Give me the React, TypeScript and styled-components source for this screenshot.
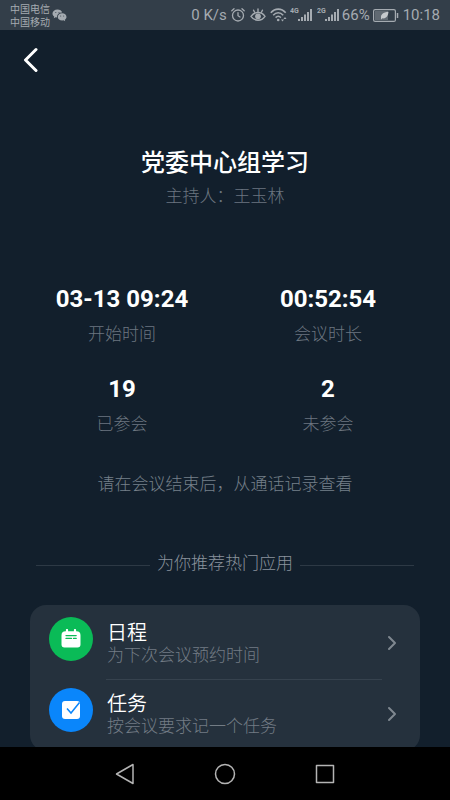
import React from "react";
import styled, { createGlobalStyle } from "styled-components";

const GlobalStyle = createGlobalStyle`
  *, *::before, *::after { box-sizing: border-box; }
  body {
    margin: 0;
    background: #121f2c;
    font-family: Roboto, "Noto Sans CJK SC", sans-serif;
  }
`;

const Page = styled.div`
  height: 100vh;
  display: flex;
  flex-direction: column;
  background: #121f2c;
  color: #ffffff;
`;

const StatusBar = styled.header`
  flex: none;
  height: 30px;
  display: flex;
  align-items: center;
  justify-content: space-between;
  padding: 0 10px;
  background: #333e49;
  color: #a5abb1;
`;

const StatusGroup = styled.div`
  display: flex;
  align-items: center;
`;

const Carriers = styled.div`
  display: flex;
  flex-direction: column;
  padding-top: 2px;
  font-size: 10px;
  line-height: 13px;
  margin-right: 2px;
`;

const StatusText = styled.span<{ $gap: number }>`
  font-size: 15px;
  line-height: 20px;
  white-space: pre;
  margin-right: ${(p) => p.$gap}px;
`;

const StatusIcon = styled.svg<{ $gap: number }>`
  display: block;
  flex: none;
  margin-right: ${(p) => p.$gap}px;
`;

const Content = styled.main`
  flex: 1;
  min-height: 0;
  overflow-y: auto;
  scrollbar-width: none;
  display: flex;
  flex-direction: column;
`;

const TopBar = styled.div`
  flex: none;
  padding: 12px 12px 0;
`;

const BackButton = styled.button`
  display: flex;
  align-items: center;
  justify-content: center;
  width: 36px;
  height: 36px;
  padding: 0;
  border: 0;
  background: none;
  color: #ffffff;
`;

const Heading = styled.section`
  padding-top: 67px;
  text-align: center;
`;

const Title = styled.h1`
  margin: 0;
  font-size: 24px;
  line-height: 36px;
  font-weight: 500;
`;

const Muted = styled.p`
  margin: 0;
  font-size: 17px;
  line-height: 24px;
  font-weight: 300;
  color: #6c7680;
`;

const HostLine = styled(Muted)`
  margin-top: 3px;
`;

const Stats = styled.dl`
  display: grid;
  grid-template-columns: 1fr 1fr;
  row-gap: 29px;
  margin: 77px 0 0;
  padding: 0 19px;
`;

const Stat = styled.div`
  display: flex;
  flex-direction: column-reverse;
  align-items: center;
  gap: 9px;
`;

const StatLabel = styled.dt`
  font-size: 17px;
  line-height: 24px;
  font-weight: 300;
  color: #6c7680;
`;

const StatValue = styled.dd`
  margin: 0;
  font-size: 24px;
  line-height: 28px;
  font-weight: 700;
`;

const Notice = styled(Muted)`
  margin-top: 36px;
  text-align: center;
  color: #76808a;
`;

const SectionTitle = styled.h2`
  display: flex;
  align-items: center;
  gap: 7px;
  margin: 55px 36px 0;
  font-size: 17px;
  line-height: 24px;
  font-weight: 300;
  color: #8a939d;

  &::before,
  &::after {
    content: "";
    flex: 1;
    height: 1px;
    margin-top: 4px;
    background: #2d3945;
  }
`;

const AppCard = styled.nav`
  flex: none;
  margin: 30px 30px 20px;
  padding-top: 4px;
  border-radius: 16px;
  background: #25313d;
`;

const AppRow = styled.a`
  display: flex;
  align-items: stretch;
  padding: 0 19px;
  height: 71px;
  color: inherit;
  text-decoration: none;
`;

const AppBadge = styled.span<{ $color: string }>`
  flex: none;
  align-self: flex-start;
  display: flex;
  align-items: center;
  justify-content: center;
  width: 44px;
  height: 44px;
  margin-top: 8px;
  border-radius: 50%;
  background: ${(p) => p.$color};
`;

const AppText = styled.span<{ $divided: boolean }>`
  flex: 1;
  display: flex;
  flex-direction: column;
  margin-left: 13px;
  padding: 12px 0 0 1px;
  border-bottom: 1px solid ${(p) => (p.$divided ? "#36424e" : "transparent")};
`;

const AppName = styled.span`
  font-size: 20px;
  line-height: 24px;
  font-weight: 350;
`;

const AppHint = styled.span`
  font-size: 17px;
  line-height: 20px;
  font-weight: 300;
  color: #737c85;
`;

const Chevron = styled.svg`
  flex: none;
  align-self: center;
  display: block;
  margin: 0 3px 3px 4px;
`;

const SystemNav = styled.footer`
  flex: none;
  height: 53px;
  display: flex;
  align-items: center;
  justify-content: center;
  gap: 60px;
  background: #000000;
`;

const SystemButton = styled.button`
  display: flex;
  align-items: center;
  justify-content: center;
  width: 40px;
  height: 40px;
  padding: 0;
  border: 0;
  background: none;
  color: #b4b4b4;
`;

const WeChatIcon = () => (
  <StatusIcon $gap={0} width="15" height="13" viewBox="0 0 15 13" aria-hidden="true">
    <path d="M5.500 .5C2.600.5.500 2.300.500 4.600c0 1.300.7 2.300 1.700 3l-.4 1.600 1.800-.9 1.500.2C4.900 5.300 7 3.500 10.200 3.500 9.700 1.700 7.800.5 5.500.5z" fill="currentColor" />
    <path d="M10.200 4.300c-2.500 0-4.400 1.600-4.400 3.600s1.900 3.600 4.400 3.600l1.300-.2 1.700.9-.4-1.500c1-.6 1.700-1.600 1.700-2.800 0-2-1.900-3.600-4.300-3.600z" fill="currentColor" />
    <g fill="#333e49">
      <circle cx="3.800" cy="3.400" r=".5" />
      <circle cx="7" cy="3.400" r=".5" />
      <circle cx="8.700" cy="7" r=".5" />
      <circle cx="11.700" cy="7" r=".5" />
    </g>
  </StatusIcon>
);

const AlarmIcon = () => (
  <StatusIcon $gap={5} width="14" height="14" viewBox="0 0 14 14" fill="none" stroke="currentColor" strokeWidth="1.300" strokeLinecap="round" aria-hidden="true">
    <circle cx="7" cy="7.500" r="5.500" />
    <path d="M7 4.700v3l2 1.300M.8 2.800 3 .8M13.200 2.800 11 .8" />
  </StatusIcon>
);

const EyeIcon = () => (
  <StatusIcon $gap={4} width="16" height="14" viewBox="0 0 16 14" fill="none" stroke="currentColor" strokeWidth="1.400" strokeLinecap="round" aria-hidden="true">
    <path d="M1 8.300C4.500 3.300 11.500 3.300 15 8.300 11.500 13.500 4.500 13.500 1 8.300z" />
    <circle cx="8" cy="8.300" r="2.200" fill="currentColor" />
    <path d="M8 1v2.500M3.600 2.200l1 2M12.400 2.200l-1 2" />
  </StatusIcon>
);

const WifiIcon = () => (
  <StatusIcon $gap={3} width="17" height="14" viewBox="0 0 17 14" fill="none" stroke="currentColor" strokeWidth="1.600" aria-hidden="true">
    <path d="M.8 4.800C5-.1 11.500-.1 15.700 4.800M3.200 7.200c3-3.200 7-3.200 10 0M5.600 9.600c1.700-1.700 3.600-1.700 5.300 0" />
    <circle cx="8.200" cy="12" r="1.300" fill="currentColor" stroke="none" />
    <path d="M11 11.500h3l-1.500 2zM13.500 11l1.500-2 1.500 2z" fill="currentColor" stroke="none" />
  </StatusIcon>
);

const Signal = ({ label }: { label: string }) => (
  <StatusIcon $gap={label === "4G" ? 4 : 2} width="23" height="16" viewBox="0 0 23 16" fill="currentColor" role="img" aria-label={label}>
    <text x="0" y="6" fontSize="7" fontWeight="700" fontFamily="Roboto, sans-serif">{label}</text>
    <path d="M8 12h2v2H8zM11 10h2v4h-2zM14 7.500h2V14h-2zM17 5h2v9h-2zM20 2h2v12h-2z" />
  </StatusIcon>
);

const BatteryIcon = () => (
  <StatusIcon $gap={4} width="26" height="13" viewBox="0 0 26 13" aria-hidden="true">
    <rect x=".6" y=".6" width="21.800" height="11.800" rx="1.500" fill="none" stroke="currentColor" strokeWidth="1.200" />
    <rect x="2" y="2" width="13" height="9" fill="currentColor" opacity=".4" />
    <path d="M8 9c-.5-3.500 2-5.500 7.500-6.200C15.200 7 13 10 9.500 9.300L8.200 10.500z" fill="#c5c9cd" />
    <path d="M24.500 4v5" stroke="currentColor" strokeWidth="1.500" />
  </StatusIcon>
);

const CalendarIcon = () => (
  <svg width="20" height="20" viewBox="0 0 20 20" aria-hidden="true">
    <path d="M4.500 2.300h11a4 4 0 0 1 4 4v9.200a3 3 0 0 1-3 3h-13a3 3 0 0 1-3-3V6.300a4 4 0 0 1 4-4z" fill="#fff" />
    <path d="M6 1v2.500M14 1v2.500" stroke="#fff" strokeWidth="2.200" strokeLinecap="round" />
    <path d="M5 6.600h10.200M5 9.400h5.500M12.500 9.400h2.700" stroke="#0abb57" strokeWidth="1.300" strokeLinecap="round" />
  </svg>
);

const TaskIcon = () => (
  <svg width="20" height="20" viewBox="0 0 20 20" fill="none" aria-hidden="true">
    <rect x="1" y="1" width="18" height="18" rx="3" fill="#fff" />
    <path d="m6 8.500 4 4.500 8.500-10.500" stroke="#0a86fb" strokeWidth="1.500" />
  </svg>
);

const stats = [
  { label: "开始时间", value: "03-13 09:24" },
  { label: "会议时长", value: "00:52:54" },
  { label: "已参会", value: "19" },
  { label: "未参会", value: "2" },
];

const apps = [
  { name: "日程", hint: "为下次会议预约时间", color: "#0abb57", href: "#schedule", icon: <CalendarIcon /> },
  { name: "任务", hint: "按会议要求记一个任务", color: "#0a86fb", href: "#tasks", icon: <TaskIcon /> },
];

export default function App() {
  return (
    <Page lang="zh-CN">
      <GlobalStyle />
      <StatusBar>
        <StatusGroup>
          <Carriers>
            <span>中国电信</span>
            <span>中国移动</span>
          </Carriers>
          <WeChatIcon />
        </StatusGroup>
        <StatusGroup>
          <StatusText $gap={4}>0 K/s</StatusText>
          <AlarmIcon />
          <EyeIcon />
          <WifiIcon />
          <Signal label="4G" />
          <Signal label="2G" />
          <StatusText $gap={3}>66%</StatusText>
          <BatteryIcon />
          <StatusText $gap={0}>10:18</StatusText>
        </StatusGroup>
      </StatusBar>
      <Content>
        <TopBar>
          <BackButton type="button" aria-label="返回">
            <svg width="16" height="26" viewBox="0 0 16 26" fill="none" stroke="currentColor" strokeWidth="3" strokeLinecap="round" strokeLinejoin="round">
              <path d="M14 2.500 3.500 13 14 23.500" />
            </svg>
          </BackButton>
        </TopBar>
        <Heading>
          <Title>党委中心组学习</Title>
          <HostLine>主持人：王玉林</HostLine>
        </Heading>
        <Stats>
          {stats.map((s) => (
            <Stat key={s.label}>
              <StatLabel>{s.label}</StatLabel>
              <StatValue>{s.value}</StatValue>
            </Stat>
          ))}
        </Stats>
        <Notice>请在会议结束后，从通话记录查看</Notice>
        <SectionTitle>为你推荐热门应用</SectionTitle>
        <AppCard aria-label="热门应用">
          {apps.map((a, i) => (
            <AppRow key={a.name} href={a.href}>
              <AppBadge $color={a.color}>{a.icon}</AppBadge>
              <AppText $divided={i < apps.length - 1}>
                <AppName>{a.name}</AppName>
                <AppHint>{a.hint}</AppHint>
              </AppText>
              <Chevron width="12" height="16" viewBox="0 0 12 16" fill="none" stroke="#7f8890" strokeWidth="2" strokeLinecap="round" strokeLinejoin="round" aria-hidden="true">
                <path d="m3 2 6 6-6 6" />
              </Chevron>
            </AppRow>
          ))}
        </AppCard>
      </Content>
      <SystemNav>
        <SystemButton type="button" aria-label="返回键">
          <svg width="22" height="22" viewBox="0 0 22 22" fill="none" stroke="currentColor" strokeWidth="1.500" strokeLinejoin="round">
            <path d="M19 1.500v19L2.500 11z" />
          </svg>
        </SystemButton>
        <SystemButton type="button" aria-label="主屏幕">
          <svg width="22" height="22" viewBox="0 0 22 22" fill="none" stroke="currentColor" strokeWidth="1.500">
            <circle cx="11" cy="11" r="9.500" />
          </svg>
        </SystemButton>
        <SystemButton type="button" aria-label="最近任务">
          <svg width="22" height="22" viewBox="0 0 22 22" fill="none" stroke="currentColor" strokeWidth="1.500" strokeLinejoin="round">
            <rect x="2.500" y="2.500" width="17" height="17" />
          </svg>
        </SystemButton>
      </SystemNav>
    </Page>
  );
}
